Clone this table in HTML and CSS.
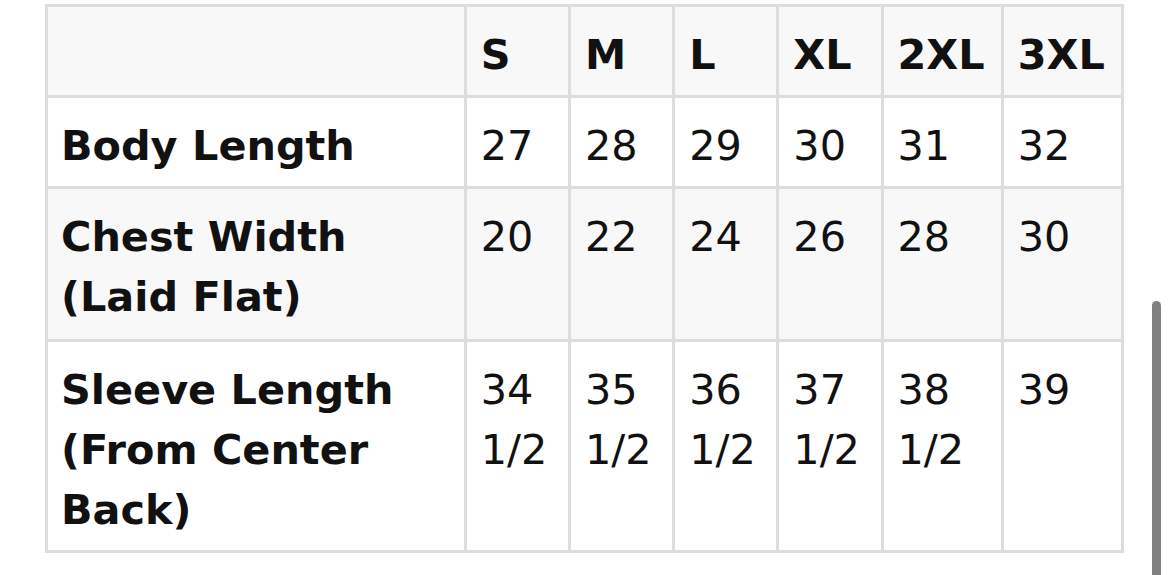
FILE: index.html
```html
<!DOCTYPE html>
<html lang="en">
<head>
<meta charset="utf-8">
<title>Size Chart</title>
<link rel="stylesheet" href="styles.css">
</head>
<body>
<div class="wrap">
  <table class="size-table">
    <colgroup>
      <col class="c-label">
      <col class="c-sm">
      <col class="c-sm">
      <col class="c-sm">
      <col class="c-sm">
      <col class="c-lg">
      <col class="c-lg">
    </colgroup>
    <thead>
      <tr class="shade">
        <th></th>
        <th>S</th>
        <th>M</th>
        <th>L</th>
        <th>XL</th>
        <th>2XL</th>
        <th>3XL</th>
      </tr>
    </thead>
    <tbody>
      <tr>
        <th>Body Length</th>
        <td>27</td><td>28</td><td>29</td><td>30</td><td>31</td><td>32</td>
      </tr>
      <tr class="shade tall">
        <th>Chest Width (Laid Flat)</th>
        <td>20</td><td>22</td><td>24</td><td>26</td><td>28</td><td>30</td>
      </tr>
      <tr>
        <th>Sleeve Length (From Center Back)</th>
        <td>34 1/2</td><td>35 1/2</td><td>36 1/2</td><td>37 1/2</td><td>38 1/2</td><td>39</td>
      </tr>
    </tbody>
  </table>
</div>
<div class="scroll-thumb"></div>
</body>
</html>
```

FILE: styles.css
```css
html, body {
  margin: 0;
  padding: 0;
  background: #ffffff;
}

body {
  font-family: "DejaVu Sans", Verdana, sans-serif;
  color: #111111;
  overflow: hidden;
}

.wrap {
  padding: 4px 0 0 45px;
}

.size-table {
  border-collapse: collapse;
  table-layout: fixed;
  width: 1079px;
  font-size: 41.4px;
  line-height: 60px;
}

.c-label { width: 418px; }
.c-sm { width: 104px; }
.c-lg { width: 120px; }

.size-table th,
.size-table td {
  border: 3px solid #dddddd;
  padding: 18px 14px 10px 14px;
  text-align: left;
  vertical-align: top;
}

.size-table th {
  font-weight: bold;
}

.size-table td {
  font-weight: normal;
}

.size-table tr.shade th,
.size-table tr.shade td {
  background: #f8f8f8;
}

.size-table tr.tall th,
.size-table tr.tall td {
  padding-bottom: 12px;
}

.size-table tbody th {
  padding-left: 13px;
}

.scroll-thumb {
  position: absolute;
  left: 1152px;
  top: 301px;
  width: 9px;
  height: 290px;
  border-radius: 5px;
  background: #808080;
}
```
